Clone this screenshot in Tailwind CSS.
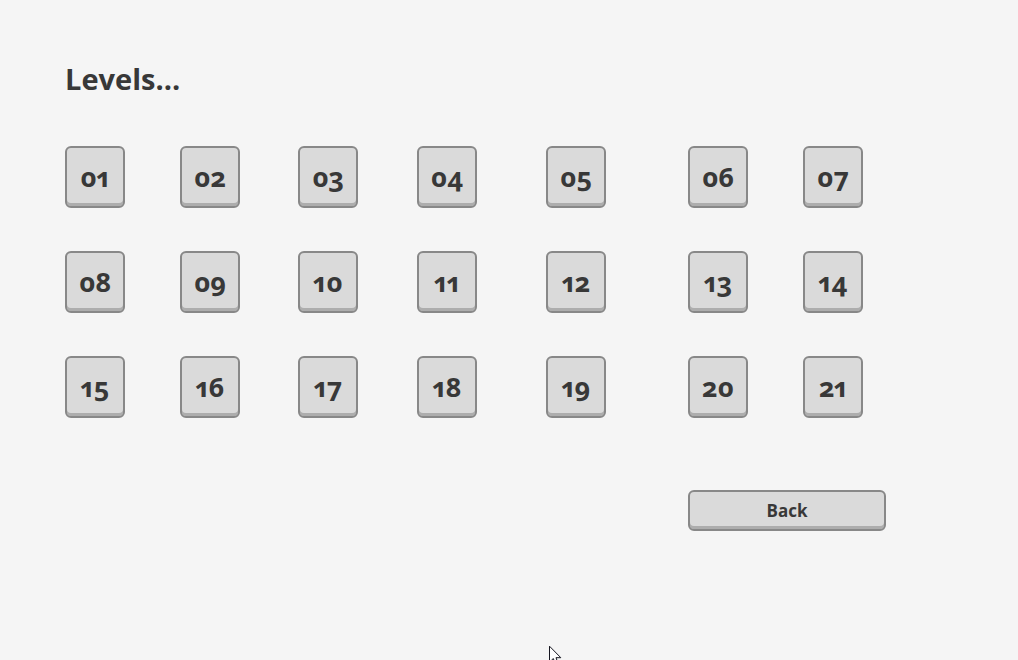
<!DOCTYPE html>
<html lang="en">
<head>
<meta charset="utf-8">
<meta name="viewport" content="width=device-width, initial-scale=1">
<title>Levels</title>
<script src="https://cdn.jsdelivr.net/npm/@tailwindcss/browser@4"></script>
</head>
<body class="relative min-h-screen overflow-hidden bg-[#f5f5f5] font-['Open_Sans','Noto_Sans',sans-serif] font-bold text-[#383838]">
<main class="pt-[59px] pr-[132px] pb-16 pl-[65px]">
  <h1 class="text-[29px] leading-10 font-bold">Levels...</h1>
  <div id="levels" class="mt-[47px] grid grid-cols-[115fr_118fr_119fr_129fr_142fr_115fr_83fr] gap-y-[43px]">
    <template>
      <button type="button" class="h-[62px] w-[60px] cursor-pointer rounded-md border-2 border-[#888888] bg-[#dadada] text-[27px] leading-8 font-bold [font-variant-numeric:oldstyle-nums_proportional-nums] shadow-[inset_0_-3px_0_#adadad]"></button>
    </template>
    <button id="back" type="button" class="order-last col-span-2 col-start-6 mt-[29px] h-[41px] cursor-pointer rounded-md border-2 border-[#888888] bg-[#dadada] text-[17px] leading-6 font-bold shadow-[inset_0_-3px_0_#adadad]">Back</button>
  </div>
</main>
<svg class="pointer-events-none absolute top-[645px] left-[549px] h-[19px] w-[13px]" viewBox="0 0 13 19" aria-hidden="true">
  <path d="M.5 1.2V17.5L4.2 13.5L6.6 18.5L8.8 17.5L7 12.7H11.8Z" fill="#fff" stroke="#15151f" stroke-width="1"/>
</svg>
<script>
  const grid = document.getElementById('levels');
  const template = grid.querySelector('template').content.querySelector('button');
  for (let level = 1; level <= 21; level++) {
    const button = template.cloneNode(true);
    button.textContent = String(level).padStart(2, '0');
    grid.insertBefore(button, document.getElementById('back'));
  }
</script>
</body>
</html>
